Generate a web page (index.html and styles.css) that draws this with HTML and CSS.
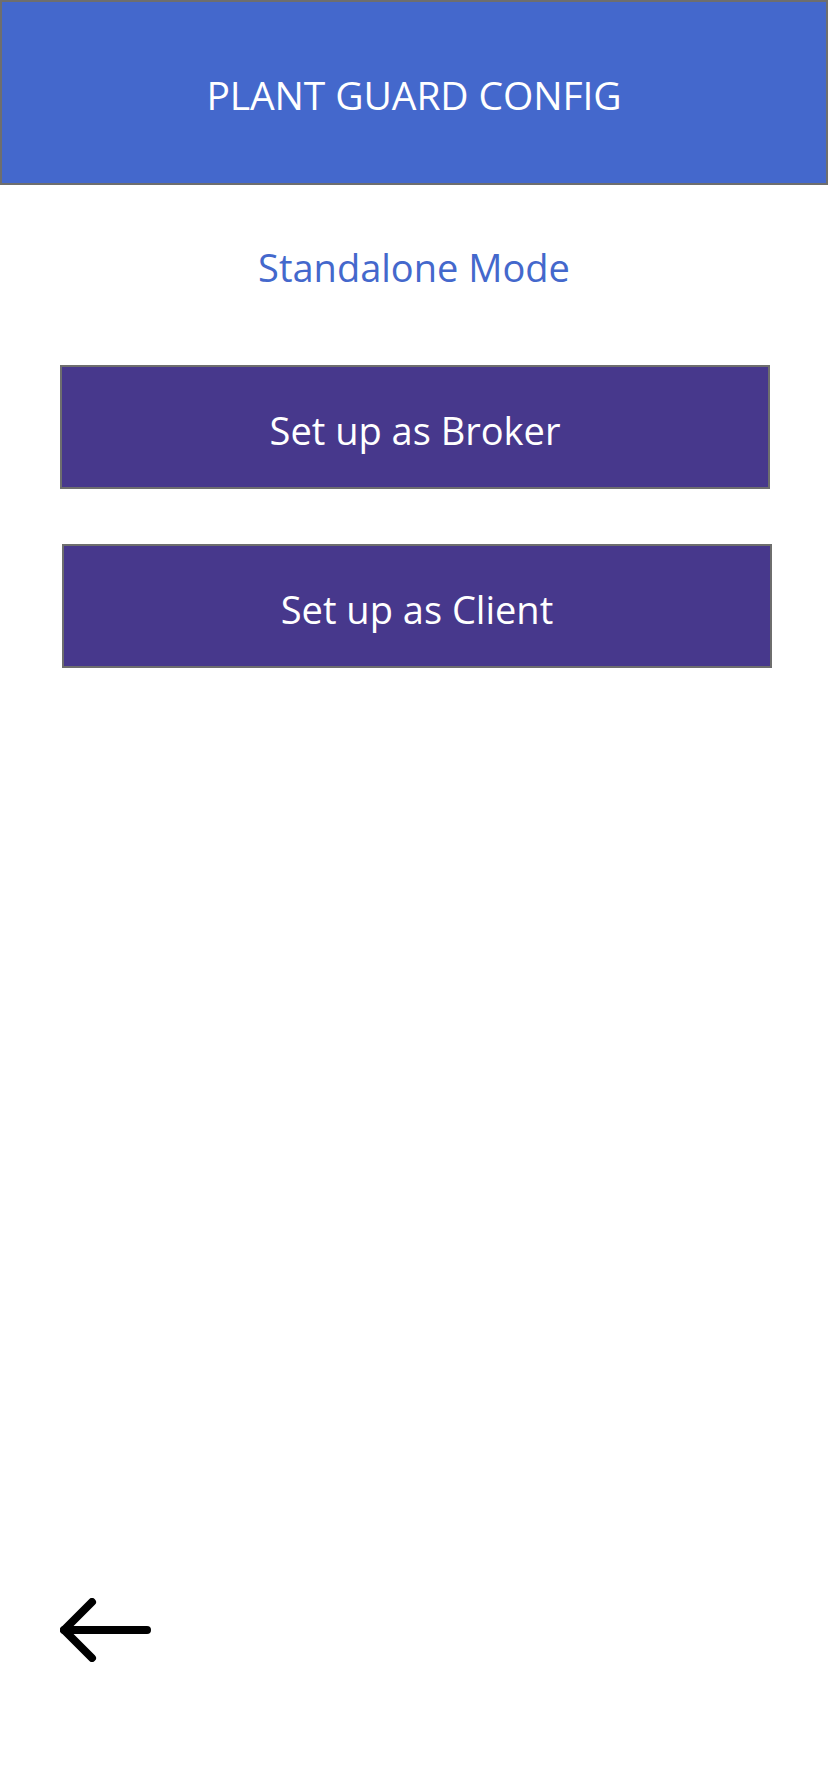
FILE: index.html
```html
<!DOCTYPE html>
<html lang="en">
<head>
<meta charset="utf-8">
<title>Plant Guard Config</title>
<link rel="stylesheet" href="styles.css">
</head>
<body>
<div class="page">
  <header class="app-header">
    <h1 class="app-title">PLANT GUARD CONFIG</h1>
  </header>
  <main class="content">
    <p class="mode-label">Standalone Mode</p>
    <button class="action-btn">Set up as Broker</button>
    <button class="action-btn action-btn--shift">Set up as Client</button>
  </main>
  <footer class="footer">
    <button class="back-btn" aria-label="Back">
      <svg width="96" height="64" viewBox="0 0 96 64" fill="none" stroke="#000" stroke-width="8" stroke-linecap="round" stroke-linejoin="round">
        <path d="M4 32 H87"/>
        <path d="M32 4 L4 32 L32 60"/>
      </svg>
    </button>
  </footer>
</div>
</body>
</html>
```

FILE: styles.css
```css
* { box-sizing: border-box; }
html, body { margin: 0; padding: 0; background: #ffffff; }
body {
  font-family: "Open Sans", "Noto Sans", "Liberation Sans", sans-serif;
}
.page {
  width: 828px;
  height: 1792px;
  display: flex;
  flex-direction: column;
}
.app-header {
  height: 185px;
  background: #4468cc;
  border: 2px solid #6e6e6e;
  display: flex;
  align-items: center;
  justify-content: center;
  padding-top: 5px;
}
.app-title {
  margin: 0;
  font-weight: 400;
  font-size: 39px;
  line-height: 54px;
  color: #ffffff;
  letter-spacing: -0.1px;
}
.content {
  display: flex;
  flex-direction: column;
  align-items: flex-start;
}
.mode-label {
  align-self: center;
  margin: 55px 0 0;
  font-size: 38px;
  line-height: 54px;
  color: #4468cc;
}
.action-btn {
  width: 710px;
  height: 124px;
  margin: 71px 0 0 60px;
  background: #47388c;
  border: 2px solid #6e6e6e;
  color: #ffffff;
  font-family: inherit;
  font-size: 38px;
  padding: 6px 0 0;
}
.action-btn--shift {
  margin-top: 55px;
  margin-left: 62px;
}
.footer {
  margin-top: auto;
  padding: 0 0 130px 60px;
}
.back-btn {
  background: none;
  border: 0;
  padding: 0;
  display: block;
}
.back-btn svg { display: block; }
```
